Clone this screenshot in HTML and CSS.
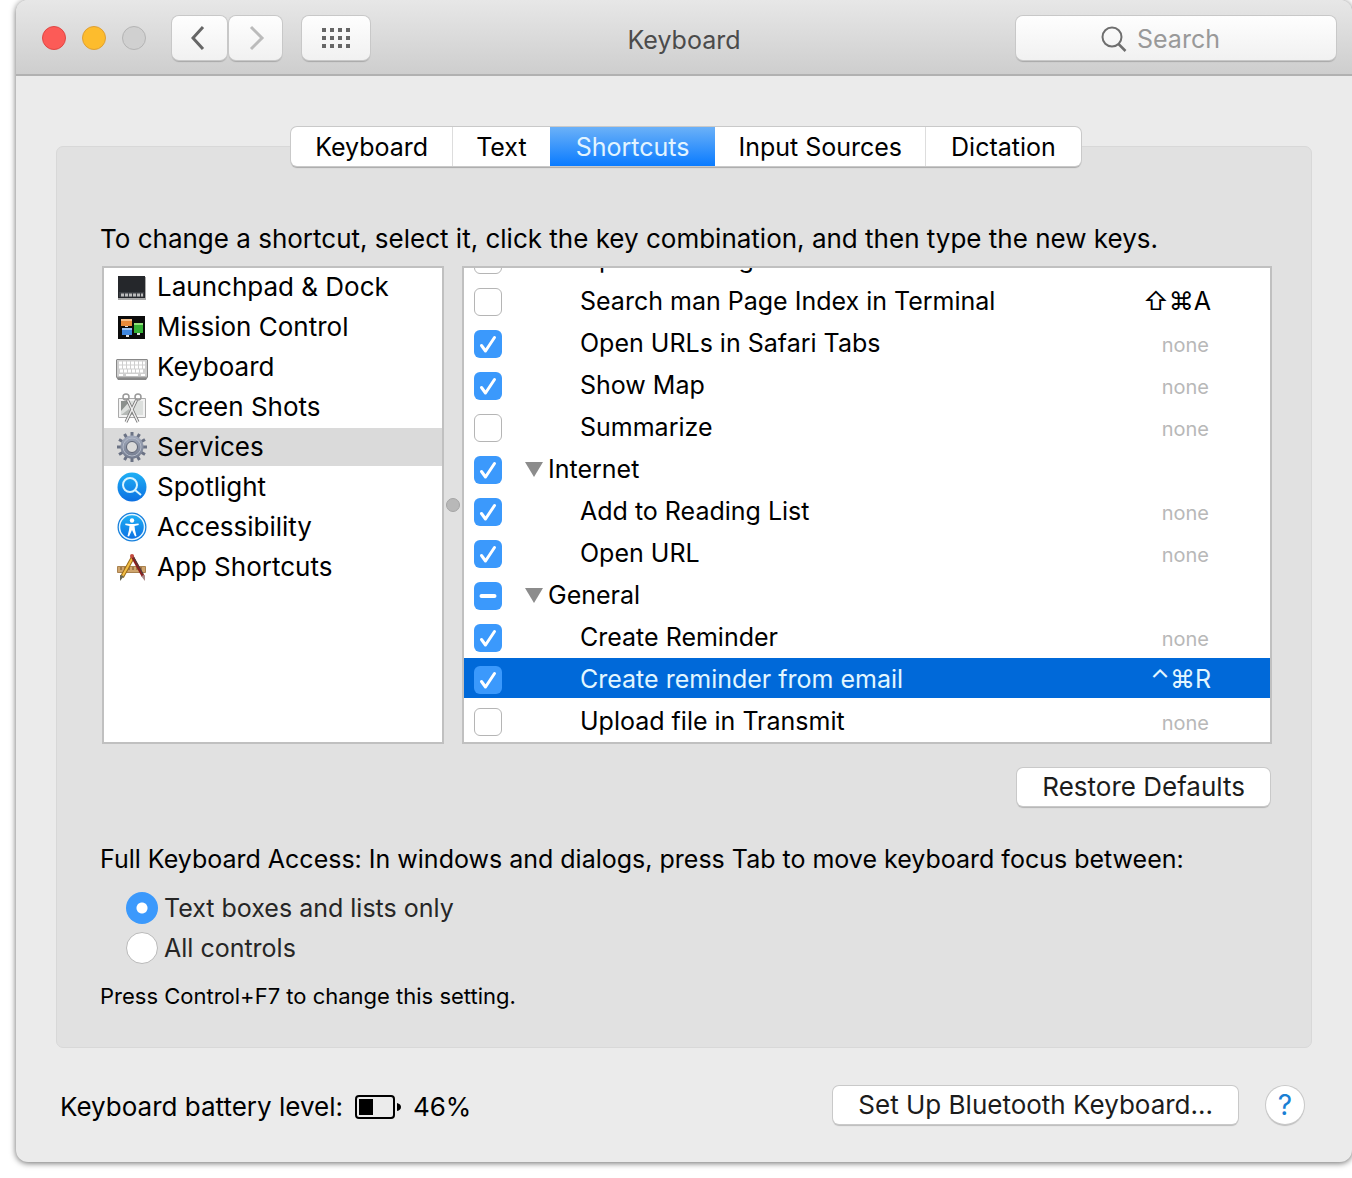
FILE: index.html
```html
<!DOCTYPE html>
<html lang="en">
<head>
<meta charset="UTF-8">
<meta name="viewport" content="width=device-width, initial-scale=1.0">
<title>Keyboard</title>
<link rel="stylesheet" href="styles.css">
</head>
<body>

<div class="window">
  <header class="titlebar">
    <div class="controls">
      <div class="lights">
        <button class="light close" aria-label="Close"></button>
        <button class="light minimize" aria-label="Minimize"></button>
        <button class="light zoom" aria-label="Zoom" disabled></button>
      </div>
      <div class="nav">
        <button class="tool back" aria-label="Back">
          <svg width="18" height="26" viewBox="0 0 18 26"><path d="M12 2L2 13l10 11" fill="none" stroke="#666" stroke-width="3"/></svg>
        </button>
        <button class="tool" aria-label="Forward" disabled>
          <svg width="18" height="26" viewBox="0 0 18 26"><path d="M4 2l11 11L4 24" fill="none" stroke="#bbb" stroke-width="3"/></svg>
        </button>
      </div>
      <button class="tool show-all" aria-label="Show all">
        <svg width="28" height="20" viewBox="0 0 28 20" fill="#666">
          <path d="M0 0h4v4H0zM8 0h4v4H8zM16 0h4v4h-4zM24 0h4v4h-4zM0 8h4v4H0zM8 8h4v4H8zM16 8h4v4h-4zM24 8h4v4h-4zM0 16h4v4H0zM8 16h4v4H8zM16 16h4v4h-4zM24 16h4v4h-4z"/>
        </svg>
      </button>
    </div>
    <h1 class="title">Keyboard</h1>
    <label class="search">
      <svg width="26" height="26" viewBox="0 0 26 26" fill="none" stroke="#6e6e6e" stroke-width="2"><circle cx="11" cy="11" r="9.5"/><path d="M17.5 18l7 7" stroke-width="2.5"/></svg>
      <input type="search" placeholder="Search" aria-label="Search">
    </label>
  </header>

  <main class="panel">
    <nav class="tabs">
      <button>Keyboard</button>
      <button>Text</button>
      <button class="active">Shortcuts</button>
      <button>Input Sources</button>
      <button>Dictation</button>
    </nav>

    <p class="hint">To change a shortcut, select it, click the key combination, and then type the new keys.</p>

    <div class="split">
      <ul class="categories">
        <li><button>
          <svg width="32" height="32" viewBox="0 0 32 32"><path d="M2 6h28v23H2z" fill="#aaa"/><path d="M2 5h27v22H2z" fill="#25272b"/><path d="M3 21h25v5H3z" fill="#3a3d42"/><path d="M5 24h22" stroke="#bbb" stroke-width="3" stroke-dasharray="3 1"/></svg>
          Launchpad &amp; Dock</button></li>
        <li><button>
          <svg width="32" height="32" viewBox="0 0 32 32"><path d="M2 5h27v23H2z" fill="#0b0b0b"/><path d="M5 8h11v7H5z" fill="#e88b3a"/><path d="M5 8h11v2H5z" fill="#f7c08a"/><path d="M6 17h10v7H6z" fill="#3f87e0"/><path d="M6 17h10v2H6z" fill="#9cc6f7"/><path d="M18 12h9v10h-9z" fill="#35b135"/><path d="M18 12h9v2h-9z" fill="#92e27d"/><path d="M9 15h3v1H9zM10 24h3v2h-3zM21 22h3v2h-3z" fill="#ddd"/></svg>
          Mission Control</button></li>
        <li><button>
          <svg width="32" height="32" viewBox="0 0 32 32"><path d="M0 9l1-1h30l1 1v17l-2 3H2l-2-3z" fill="#888"/><path d="M1 9h30v17H1z" fill="#cfcfcf"/><path d="M3 12h26M3 16h26M4 20h24" stroke="#fff" stroke-width="3" stroke-dasharray="3 1"/><path d="M3 24h4m3 0h12m3 0h4" stroke="#fff" stroke-width="2"/><path d="M1 26h30" stroke="#aaa"/></svg>
          Keyboard</button></li>
        <li><button>
          <svg width="32" height="32" viewBox="0 0 32 32"><path d="M2.5 7.5h27v19h-27z" fill="#f2f2f2" stroke="#aaa"/><path d="M5 10h22v14H5z" fill="#dcdfdd"/><path d="M5 10h9L5 20z" fill="#8b908d"/><path d="M5 24l8-6 6 6z" fill="#b4b8b5"/><path d="M11 8l11 23M21 8L10 31" stroke="#777" stroke-width="3"/><path d="M11 8l11 23M21 8L10 31" stroke="#eee" stroke-width="1.5"/><g fill="none" stroke="#999" stroke-width="1.5"><circle cx="10" cy="6" r="3"/><circle cx="22" cy="6" r="3"/></g></svg>
          Screen Shots</button></li>
        <li><button class="selected">
          <svg width="32" height="32" viewBox="0 0 32 32"><defs><linearGradient id="steel" x1="0" y1="0" x2="0" y2="1"><stop offset="0" stop-color="#a3abbd"/><stop offset="1" stop-color="#727a8d"/></linearGradient></defs><path d="M16 1v30M1 16h30M8.500 3l15 26M23.500 3l-15 26M3 8.500l26 15M29 8.500l-26 15" stroke="#6b7284" stroke-width="3"/><circle cx="16" cy="16" r="11.5" fill="url(#steel)"/><circle cx="16" cy="16" r="9" fill="none" stroke="#b3bac9"/><circle cx="16" cy="16" r="5.5" fill="#dadada" stroke="#5c6374"/></svg>
          Services</button></li>
        <li><button>
          <svg width="32" height="32" viewBox="0 0 32 32"><defs><linearGradient id="blue" x1="0" y1="0" x2="0" y2="1"><stop offset="0" stop-color="#1fb0f5"/><stop offset="1" stop-color="#0c6fe2"/></linearGradient></defs><circle cx="16" cy="16" r="14.5" fill="url(#blue)"/><g fill="none" stroke="#d9f4ff" stroke-width="2"><circle cx="14" cy="14" r="7"/><path d="M19 19l6 5"/></g></svg>
          Spotlight</button></li>
        <li><button>
          <svg width="32" height="32" viewBox="0 0 32 32"><circle cx="16" cy="16" r="14.5" fill="#157fdc"/><circle cx="16" cy="16" r="12.5" fill="url(#blue)" stroke="#e6f6ff" stroke-width="1.5"/><circle cx="16" cy="9.5" r="2.2" fill="#fff"/><path d="M9.5 12.5L14 13h4l4.5-.5.3 1.5-4.300 1 .5 4 1.5 6-1.500.5-3-6.500-3 6.500-1.500-.5 1.500-6 .5-4-4.300-1z" fill="#fff"/></svg>
          Accessibility</button></li>
        <li><button>
          <svg width="32" height="32" viewBox="0 0 32 32"><path d="M1.5 15.5h28v6h-28z" fill="#cfa56d" stroke="#a9824f"/><path d="M5 16v3m4-3v3m4-3v3m4-3v3m4-3v3m4-3v3" stroke="#6f4e26"/><path d="M17 6L6 26" stroke="#9a6c18" stroke-width="4"/><path d="M17 6L6 26" stroke="#f4be45" stroke-width="2"/><path d="M8 25l-4 5v-6z" fill="#665"/><path d="M16 5l11 20" stroke="#8a1f1f" stroke-width="3"/><path d="M17 5l10 18" stroke="#444" stroke-width="1"/><path d="M25 25l4 5v-6z" fill="#a88"/><circle cx="16" cy="5" r="2" fill="#c44b3f"/></svg>
          App Shortcuts</button></li>
      </ul>

      <div class="divider"></div>

      <div class="services">
        <table>
          <tr>
            <td class="check"><input type="checkbox" id="s1"></td>
            <td class="name"><label for="s1">Open man Page in Terminal</label></td>
            <td class="keys">⇧⌘M</td>
          </tr>
          <tr>
            <td class="check"><input type="checkbox" id="s2"></td>
            <td class="name"><label for="s2">Search man Page Index in Terminal</label></td>
            <td class="keys">⇧⌘A</td>
          </tr>
          <tr>
            <td class="check"><input type="checkbox" id="s3" checked></td>
            <td class="name"><label for="s3">Open URLs in Safari Tabs</label></td>
            <td class="keys none">none</td>
          </tr>
          <tr>
            <td class="check"><input type="checkbox" id="s4" checked></td>
            <td class="name"><label for="s4">Show Map</label></td>
            <td class="keys none">none</td>
          </tr>
          <tr>
            <td class="check"><input type="checkbox" id="s5"></td>
            <td class="name"><label for="s5">Summarize</label></td>
            <td class="keys none">none</td>
          </tr>
          <tr>
            <td class="check"><input type="checkbox" id="s6" checked></td>
            <td class="name group"><label for="s6">Internet</label></td>
            <td class="keys"></td>
          </tr>
          <tr>
            <td class="check"><input type="checkbox" id="s7" checked></td>
            <td class="name"><label for="s7">Add to Reading List</label></td>
            <td class="keys none">none</td>
          </tr>
          <tr>
            <td class="check"><input type="checkbox" id="s8" checked></td>
            <td class="name"><label for="s8">Open URL</label></td>
            <td class="keys none">none</td>
          </tr>
          <tr>
            <td class="check"><input type="checkbox" id="general"></td>
            <td class="name group"><label for="general">General</label></td>
            <td class="keys"></td>
          </tr>
          <tr>
            <td class="check"><input type="checkbox" id="s10" checked></td>
            <td class="name"><label for="s10">Create Reminder</label></td>
            <td class="keys none">none</td>
          </tr>
          <tr class="selected">
            <td class="check"><input type="checkbox" id="s11" checked></td>
            <td class="name"><label for="s11">Create reminder from email</label></td>
            <td class="keys">⌃⌘R</td>
          </tr>
          <tr>
            <td class="check"><input type="checkbox" id="s12"></td>
            <td class="name"><label for="s12">Upload file in Transmit</label></td>
            <td class="keys none">none</td>
          </tr>
        </table>
      </div>
    </div>

    <div class="restore">
      <button class="push">Restore Defaults</button>
    </div>

    <fieldset class="access">
      <legend>Full Keyboard Access: In windows and dialogs, press Tab to move keyboard focus between:</legend>
      <label><input type="radio" name="access" checked> Text boxes and lists only</label>
      <label><input type="radio" name="access"> All controls</label>
    </fieldset>
    <p class="note">Press Control+F7 to change this setting.</p>
  </main>

  <footer class="footer">
    <div class="battery">
      <span>Keyboard battery level:</span>
      <svg width="46" height="24" viewBox="0 0 46 24"><rect x="1" y="1" width="38" height="22" rx="3" fill="none" stroke="#000" stroke-width="2"/><path d="M4 4h14v16H4z"/><path d="M42 8q4 1 4 4t-4 4z"/></svg>
      <span>46%</span>
    </div>
    <div class="actions">
      <button class="push">Set Up Bluetooth Keyboard...</button>
      <button class="help" aria-label="Help">?</button>
    </div>
  </footer>
</div>

<script>
  document.getElementById("general").indeterminate = true;
</script>

</body>
</html>
```

FILE: styles.css
```css
* {
  box-sizing: border-box;
}

body {
  margin: 0;
  padding: 0 0 16px 16px;
  background: #fff;
  font-family: Inter, "DejaVu Sans", sans-serif;
  font-size: 25px;
  line-height: 32px;
  color: #000;
}

button,
input {
  font: inherit;
  color: inherit;
  margin: 0;
}

button {
  padding: 0;
  border: none;
  background: none;
}

.window {
  background: #ebebeb;
  border-radius: 12px;
  box-shadow: 0 1px 6px rgba(0,0,0,0.6);
}

/* Title bar */
.titlebar {
  display: grid;
  grid-template-columns: 1fr auto 1fr;
  align-items: center;
  height: 76px;
  padding: 2px 16px 0;
  border-bottom: 2px solid #b1b1b1;
  border-radius: 12px 12px 0 0;
  background: linear-gradient(#e7e7e7, #cecece);
}

.controls,
.lights,
.nav {
  display: flex;
  align-items: center;
}

.lights {
  gap: 16px;
  margin: 0 26px 0 10px;
}

.light {
  width: 24px;
  height: 24px;
  border: 1px solid #b4b4b4;
  border-radius: 50%;
  background: #d0d0d0;
}

.light.close {
  background: #fc5b57;
  border-color: #df4744;
}

.light.minimize {
  background: #fdbc2d;
  border-color: #de9f34;
}

.nav {
  gap: 2px;
  margin-right: 20px;
}

.tool,
.search {
  display: flex;
  align-items: center;
  justify-content: center;
  height: 44px;
  border-radius: 7px;
  background: linear-gradient(#fefefe, #f1f1f1);
  box-shadow: 0 0 0 1px #c8c8c8, 0 2px 1px rgba(0,0,0,0.2);
}

.tool {
  width: 53px;
}

.tool.back {
  width: 55px;
}

.tool.show-all {
  width: 68px;
}

.title {
  margin: 0;
  padding-top: 4px;
  font-size: 25px;
  font-weight: 400;
  color: #4b4b4b;
}

.search {
  justify-content: flex-start;
  justify-self: end;
  width: 320px;
  gap: 10px;
  padding: 2px 10px 0 85px;
}

.search svg {
  flex: none;
}

.search input {
  flex: 1;
  min-width: 0;
  padding: 0;
  border: none;
  outline: none;
  background: none;
}

.search input::placeholder {
  color: #999;
}

/* Panel */
.panel {
  margin: 70px 40px 0;
  padding: 0 39px 35px 43px;
  border: 1px solid #d8d8d8;
  border-radius: 7px;
  background: #e1e1e1;
}

.tabs {
  display: flex;
  width: fit-content;
  height: 39px;
  margin: -20px auto 57px;
  border-radius: 6px;
  background: #fff;
  box-shadow: 0 0 0 1px #c9c9c9, 0 2px 1px rgba(0,0,0,0.25);
}

.tabs button {
  padding: 0 23px;
  border-left: 1px solid #ddd;
}

.tabs button:first-child {
  padding: 0 24px;
  border-left: none;
}

.tabs .active {
  padding: 0 26px;
  color: #e2f4ff;
  border-left: none;
  background: linear-gradient(#6bb1f8, #0a7bff);
}

.tabs .active + button {
  border-left: none;
}

.tabs button:last-child {
  padding: 0 25px;
}

.hint {
  margin: 0 0 11px;
  font-size: 26px;
}

.split {
  display: grid;
  grid-template-columns: minmax(0, 342fr) 18px minmax(0, 810fr);
  height: 478px;
  margin-left: 2px;
}

.categories,
.services {
  border: 2px solid #c0c0c0;
  background: #fff;
}

.categories {
  display: flex;
  flex-direction: column;
  gap: 2px;
  margin: 0;
  padding: 0;
  list-style: none;
  font-size: 26px;
}

.categories button {
  display: flex;
  align-items: center;
  gap: 9px;
  width: 100%;
  height: 38px;
  padding-left: 12px;
}

.categories .selected {
  background: #dadada;
}

.divider {
  display: grid;
  place-items: center;
}

.divider::before {
  content: "";
  width: 12px;
  height: 12px;
  border: 1px solid #a5a5a5;
  border-radius: 50%;
  background: #b8b8b8;
}

/* The list is scrolled to its end */
.services {
  display: flex;
  flex-direction: column;
  justify-content: flex-end;
  overflow: hidden;
}

table {
  width: 100%;
  border-spacing: 0 2px;
}

td {
  height: 40px;
  padding: 2px 0 0;
}

.check {
  width: 61px;
  padding: 4px 0 0 10px;
}

.check input {
  display: block;
  appearance: none;
  width: 28px;
  height: 28px;
  border: 1px solid #b5b5b5;
  border-radius: 6px;
  background: #fff;
}

.check input:checked,
.check input:indeterminate {
  border: none;
  background: #3b99fc url("data:image/svg+xml,%3Csvg xmlns='http://www.w3.org/2000/svg' viewBox='0 0 28 28'%3E%3Cpath d='M7.5 15.5l4 5.5L20.5 7.5' fill='none' stroke='white' stroke-width='3' stroke-linecap='round' stroke-linejoin='round'/%3E%3C/svg%3E");
}

.check input:indeterminate {
  background-image: url("data:image/svg+xml,%3Csvg xmlns='http://www.w3.org/2000/svg' viewBox='0 0 28 28'%3E%3Cpath d='M7.5 14h13' stroke='white' stroke-width='4' stroke-linecap='round'/%3E%3C/svg%3E");
}

.name {
  padding-left: 55px;
}

.name.group {
  padding-left: 0;
}

.group label {
  display: flex;
  align-items: center;
  gap: 5px;
}

.group label::before {
  content: "";
  border: 9px solid transparent;
  border-top: 15px solid #8c8c8c;
  border-bottom: none;
}

.keys {
  padding-right: 59px;
  text-align: right;
}

.keys.none {
  padding: 5px 61px 0 0;
  font-size: 20px;
  color: #b8b8b8;
}

tr.selected {
  background: #0069d9;
  color: #e2f6ff;
}

/* Buttons */
.push,
.help {
  height: 38px;
  background: #fff;
  color: #1c1c1c;
  box-shadow: 0 0 0 1px #c9c9c9, 0 2px 1px rgba(0,0,0,0.2);
}

.push {
  padding: 0 25px;
  border-radius: 6px;
  font-size: 26px;
}

.restore {
  display: flex;
  justify-content: flex-end;
  padding: 24px 2px 37px;
}

.access {
  display: flex;
  flex-direction: column;
  margin: 0;
  padding: 0;
  border: none;
}

.access legend {
  padding: 0;
  margin-bottom: 13px;
}

.access label {
  display: flex;
  align-items: center;
  gap: 6px;
  height: 40px;
  padding-left: 26px;
  color: #262626;
}

.access input {
  appearance: none;
  width: 32px;
  height: 32px;
  border: 1px solid #b9b9b9;
  border-radius: 50%;
  background: #fff;
}

.access input:checked {
  border: none;
  background: radial-gradient(circle, #fff 5px, #3b99fc 6px);
}

.note {
  margin: 12px 0 0;
  font-size: 22px;
}

/* Footer */
.footer {
  display: flex;
  justify-content: space-between;
  align-items: center;
  padding: 38px 48px 38px 44px;
}

.battery,
.actions {
  display: flex;
  align-items: center;
}

.battery {
  gap: 12px;
  padding-top: 4px;
  font-size: 26px;
}

.actions {
  gap: 28px;
}

.help {
  width: 38px;
  border-radius: 50%;
  font-size: 28px;
  color: #1a7fd4;
}
```
